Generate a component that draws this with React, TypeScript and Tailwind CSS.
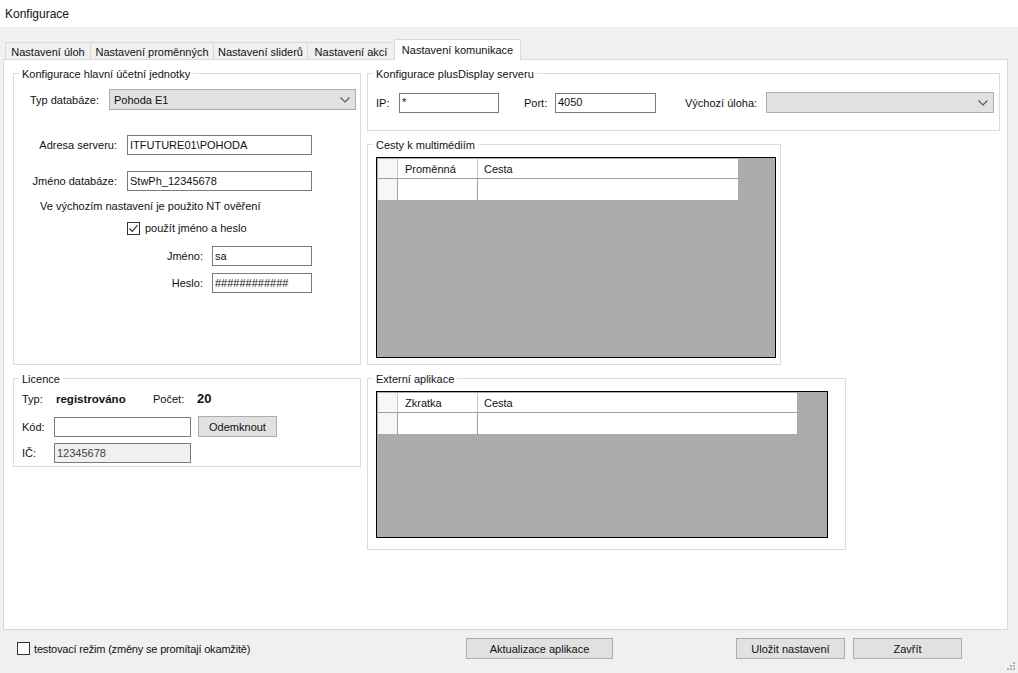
import type { ReactNode } from 'react'

const TABS = [
  { label: 'Nastavení úloh', width: 'w-[86px]' },
  { label: 'Nastavení proměnných', width: 'w-[124px]' },
  { label: 'Nastavení sliderů', width: 'w-[95px]' },
  { label: 'Nastavení akcí', width: 'w-[88px]' },
]

function Group({ title, className, children }: { title: string; className: string; children: ReactNode }) {
  return (
    <div className={`relative border border-[#dcdcdc] ${className}`}>
      <span className="absolute -top-[7px] left-[5px] bg-white px-[3px]">{title}</span>
      {children}
    </div>
  )
}

function Input({ value, className, disabled }: { value?: string; className: string; disabled?: boolean }) {
  return (
    <div
      className={`flex h-[20px] items-center border border-[#7a7a7a] px-[2px] leading-none ${
        disabled ? 'bg-[#f0f0f0] text-[#444]' : 'bg-white'
      } ${className}`}
    >
      {value}
    </div>
  )
}

function Select({ value, className }: { value?: string; className: string }) {
  return (
    <div className={`flex h-[21px] items-center justify-between border border-[#adadad] bg-[#e1e1e1] pl-[4px] pr-[5px] ${className}`}>
      <span>{value}</span>
      <svg width="10" height="6" viewBox="0 0 10 6" fill="none" stroke="#555" strokeWidth="1.1">
        <path d="M0.5 0.5 5 5 9.5 0.5" />
      </svg>
    </div>
  )
}

function Button({ label, className }: { label: string; className: string }) {
  return (
    <div className={`flex h-[21px] items-center justify-center border border-[#adadad] bg-[#e1e1e1] ${className}`}>
      {label}
    </div>
  )
}

function DataGrid({ first, lastWidth, className }: { first: string; lastWidth: string; className: string }) {
  return (
    <div className={`border border-black bg-[#ababab] p-px ${className}`}>
      <div className="flex h-[20px] w-fit border-b border-[#a0a0a0] bg-white">
        <div className="w-[20px] border-r border-[#c8c8c8] bg-[#f7f7f7]" />
        <div className="w-[80px] border-r border-[#c8c8c8] pl-[7px] leading-[20px]">{first}</div>
        <div className={`pl-[6px] leading-[20px] ${lastWidth}`}>Cesta</div>
      </div>
      <div className="flex h-[21px] w-fit bg-white">
        <div className="w-[20px] border-r border-[#a0a0a0] bg-[#f7f7f7]" />
        <div className="w-[80px] border-r border-[#a0a0a0]" />
        <div className={lastWidth} />
      </div>
    </div>
  )
}

export default function App() {
  return (
    <div className="flex h-[673px] w-[1018px] flex-col overflow-hidden bg-[#f0f0f0] font-['Liberation_Sans',sans-serif] text-[11px] leading-[14px] text-[#111]">
      <div className="flex h-[27px] shrink-0 items-center bg-white pl-[5px] text-[12px]">Konfigurace</div>

      <div className="flex h-[32px] shrink-0 items-end pl-[5px]">
        {TABS.map((t) => (
          <div key={t.label} className={`mb-[-1px] -mr-px flex h-[18px] items-center justify-center border border-b-0 border-[#d9d9d9] ${t.width}`}>
            {t.label}
          </div>
        ))}
        <div className="relative z-10 mb-[-1px] flex h-[21px] w-[127px] items-center justify-center border border-b-0 border-[#d9d9d9] bg-white">
          Nastavení komunikace
        </div>
      </div>

      <div className="ml-[3px] mr-[10px] flex h-[571px] shrink-0 gap-[6px] border border-[#d9d9d9] bg-white pl-[9px] pt-[13px]">
        <div className="flex w-[348px] flex-col gap-[13px]">
          <Group title="Konfigurace hlavní účetní jednotky" className="h-[292px] pt-[15px]">
            <div className="flex items-center gap-[10px]">
              <span className="w-[85px] text-right">Typ databáze:</span>
              <Select value="Pohoda E1" className="w-[247px]" />
            </div>
            <div className="mt-[25px] flex items-center gap-[10px]">
              <span className="w-[103px] text-right">Adresa serveru:</span>
              <Input value="ITFUTURE01\POHODA" className="w-[185px]" />
            </div>
            <div className="mt-[16px] flex items-center gap-[10px]">
              <span className="w-[103px] text-right">Jméno databáze:</span>
              <Input value="StwPh_12345678" className="w-[185px]" />
            </div>
            <div className="ml-[26px] mt-[8px]">Ve výchozím nastavení je použito NT ověření</div>
            <div className="ml-[113px] mt-[8px] flex items-center gap-[5px]">
              <div className="flex h-[13px] w-[13px] items-center justify-center border border-[#333] bg-white">
                <svg width="11" height="11" viewBox="0 0 11 11" fill="none" stroke="#333" strokeWidth="1.2">
                  <path d="M1.5 5.5 4.3 8.3 9.5 2.2" />
                </svg>
              </div>
              <span>použít jméno a heslo</span>
            </div>
            <div className="mt-[11px] flex items-center gap-[9px]">
              <span className="w-[189px] text-right">Jméno:</span>
              <Input value="sa" className="w-[100px]" />
            </div>
            <div className="mt-[7px] flex items-center gap-[9px]">
              <span className="w-[189px] text-right">Heslo:</span>
              <Input value="############" className="w-[100px]" />
            </div>
          </Group>

          <Group title="Licence" className="h-[89px] pl-[8px] pt-[13px]">
            <div className="flex">
              <span className="w-[34px]">Typ:</span>
              <span className="w-[97px] text-[11.5px] font-bold">registrováno</span>
              <span className="w-[44px]">Počet:</span>
              <span className="text-[13px] font-bold">20</span>
            </div>
            <div className="mt-[10px] flex items-center">
              <span className="w-[32px]">Kód:</span>
              <Input className="w-[137px]" />
              <Button label="Odemknout" className="ml-[7px] w-[79px]" />
            </div>
            <div className="mt-[6px] flex items-center">
              <span className="w-[32px]">IČ:</span>
              <Input value="12345678" className="w-[137px]" disabled />
            </div>
          </Group>
        </div>

        <div className="flex flex-col items-start gap-[13px]">
          <Group title="Konfigurace plusDisplay serveru" className="h-[58px] w-[633px] pl-[8px] pt-[18px]">
            <div className="flex items-center">
              <span className="w-[23px]">IP:</span>
              <Input value="*" className="w-[100px]" />
              <span className="ml-[25px] w-[31px]">Port:</span>
              <Input value="4050" className="w-[101px]" />
              <span className="ml-[29px] w-[81px]">Výchozí úloha:</span>
              <Select className="w-[228px]" />
            </div>
          </Group>
          <Group title="Cesty k multimédiím" className="h-[221px] w-[414px] pl-[8px] pt-[12px]">
            <DataGrid first="Proměnná" lastWidth="w-[260px]" className="h-[201px] w-[400px]" />
          </Group>
          <Group title="Externí aplikace" className="h-[172px] w-[479px] pl-[8px] pt-[12px]">
            <DataGrid first="Zkratka" lastWidth="w-[319px]" className="h-[147px] w-[452px]" />
          </Group>
        </div>
      </div>

      <div className="flex flex-1 items-start pl-[17px] pt-[8px]">
        <div className="mt-[4px] flex w-[449px] items-center gap-[4px]">
          <div className="-mt-[2px] h-[13px] w-[13px] border border-[#333] bg-white" />
          <span className="tracking-[-0.18px]">testovací režim (změny se promítají okamžitě)</span>
        </div>
        <Button label="Aktualizace aplikace" className="w-[147px]" />
        <Button label="Uložit nastavení" className="ml-[123px] w-[109px]" />
        <Button label="Zavřít" className="ml-[8px] w-[109px]" />
        <svg className="mb-[2px] ml-auto mr-[2px] self-end" width="10" height="10" viewBox="0 0 10 10" fill="#b4b4b4">
          <rect x="7" y="1" width="2" height="2" />
          <rect x="4" y="4" width="2" height="2" />
          <rect x="7" y="4" width="2" height="2" />
          <rect x="1" y="7" width="2" height="2" />
          <rect x="4" y="7" width="2" height="2" />
          <rect x="7" y="7" width="2" height="2" />
        </svg>
      </div>
    </div>
  )
}
